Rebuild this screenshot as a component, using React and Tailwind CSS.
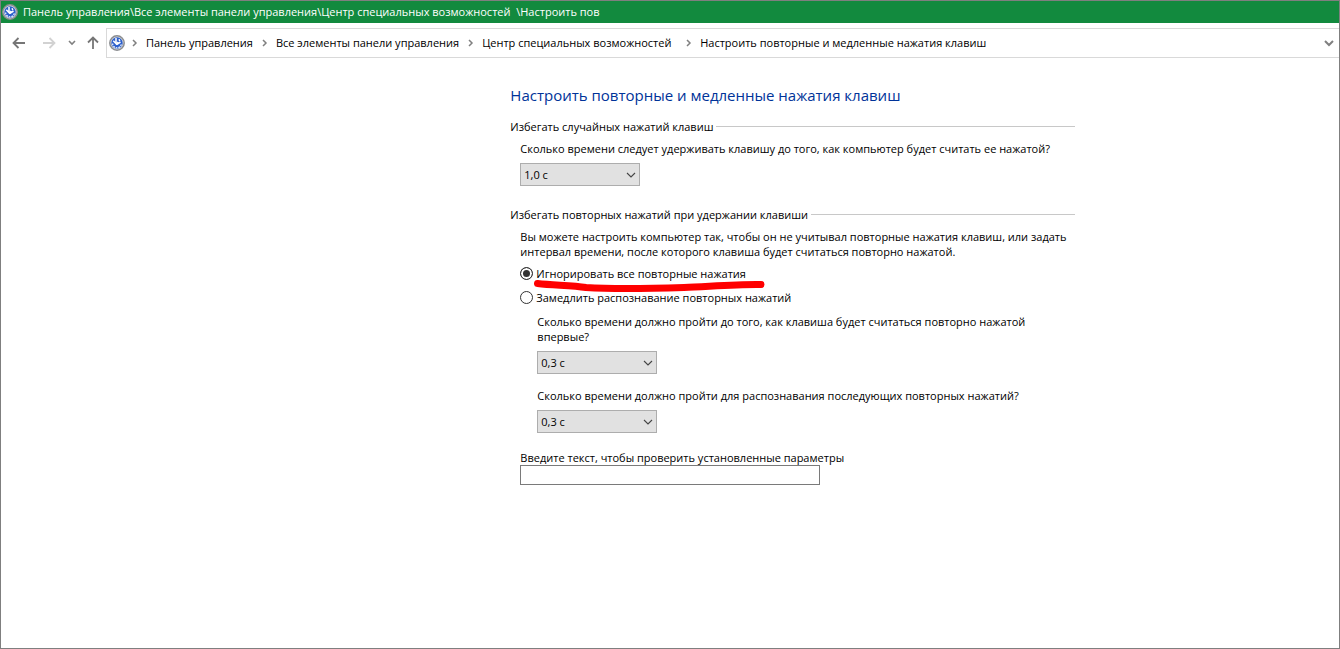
import { Fragment } from 'react';

function EaseIcon({ className }) {
  return (
    <svg className={className} viewBox="0 0 16 16" aria-hidden="true">
      <circle cx="8" cy="8" r="7.2" fill="#d9dadc" stroke="#8b8d90" strokeWidth="1.5" />
      <circle cx="8" cy="8" r="5.7" fill="#2c5fcb" />
      <path d="M3.600 8.500A4.400 4.400 0 0 0 12.400 8.500" fill="none" stroke="#e6eefc" strokeWidth="1.300" strokeDasharray="1.800 0.900" />
      <path d="M7 3v5M4.300 5.800l3.200 3.400 1.700-2.200M8 9.300l3.500-2.300M10 4.200l.8 1.800" fill="none" stroke="#fff" strokeWidth="1.500" />
    </svg>
  );
}

function Arrow({ d, className, label }) {
  return (
    <button type="button" aria-label={label} className={className}>
      <svg width="14" height="14" viewBox="0 0 14 14" fill="none" stroke="currentColor" strokeWidth="1.8">
        <path d={d} />
      </svg>
    </button>
  );
}

function Separator() {
  return (
    <svg className="mx-2 shrink-0 text-[#808080]" width="7" height="8" viewBox="0 0 7 8" fill="none" stroke="currentColor" strokeWidth="1.5" aria-hidden="true">
      <path d="M2 1l3 3-3 3" />
    </svg>
  );
}

function DelaySelect({ id, value, options }) {
  return (
    <div className="relative mt-[7px] w-[120px]">
      <select id={id} defaultValue={value} className="block h-[23px] w-full appearance-none border border-[#adadad] bg-[#e1e1e1] pr-5 pl-[3px] text-black">
        {options.map((o) => (
          <option key={o}>{o}</option>
        ))}
      </select>
      <svg className="pointer-events-none absolute top-2 right-1" width="10" height="8" viewBox="0 0 10 8" fill="none" stroke="#444444" strokeWidth="1.1" aria-hidden="true">
        <path d="M1 2l4 4 4-4" />
      </svg>
    </div>
  );
}

function GroupTitle({ children }) {
  return (
    <div className="mr-[9px] flex items-center gap-[3px]">
      <h2 className="shrink-0">{children}</h2>
      <span className="h-px flex-1 bg-[#c8c8c8]" />
    </div>
  );
}

function Choice({ value, checked, children }) {
  return (
    <label className="flex items-center gap-[3px]">
      <input
        type="radio"
        name="repeat"
        value={value}
        defaultChecked={checked}
        className="size-[13px] shrink-0 appearance-none rounded-full border border-[#333333] bg-white checked:bg-[#333333] checked:shadow-[inset_0_0_0_2px_#ffffff]"
      />
      {children}
    </label>
  );
}

const crumbs = ['Панель управления', 'Все элементы панели управления', 'Центр специальных возможностей  ', 'Настроить повторные и медленные нажатия клавиш'];
const delays = ['0,3 с', '0,5 с', '0,7 с', '1,0 с', '1,4 с', '2,0 с'];

export default function App() {
  return (
    <div className="flex min-h-screen flex-col border border-[#7f7f7f] bg-white font-['Open_Sans','Noto_Sans',sans-serif] text-[11px] leading-[15px] font-medium text-black">
      <header className="flex h-[22px] items-center bg-[#128a3e] pl-px text-white">
        <EaseIcon className="size-4 shrink-0" />
        <span className="ml-[5px] truncate pb-0.5 whitespace-pre">Панель управления\Все элементы панели управления\Центр специальных возможностей  \Настроить пов</span>
      </header>

      <nav className="flex items-center pt-[5px]" aria-label="Адрес">
        <Arrow label="Назад" className="ml-[11px] text-[#767676]" d="M13 7H1.5M6.5 2l-5 5 5 5" />
        <Arrow label="Вперёд" className="ml-4 text-[#d2d2d2]" d="M1 7h11.500M7.500 2l5 5-5 5" />
        <button type="button" aria-label="Последние расположения" className="ml-3 text-[#808080]">
          <svg width="8" height="6" viewBox="0 0 8 6" fill="none" stroke="currentColor" strokeWidth="1.6">
            <path d="M1 1l3 3 3-3" />
          </svg>
        </button>
        <Arrow label="Вверх" className="ml-2.5 text-[#767676]" d="M7 13V1.500M2 6.500l5-5 5 5" />
        <div className="ml-1.5 flex h-[30px] min-w-0 flex-1 items-center border border-r-0 border-[#d9d9d9] pl-0.5">
          <EaseIcon className="-mr-0.5 size-4 shrink-0" />
          {crumbs.map((c) => (
            <Fragment key={c}>
              <Separator />
              <a href="#" className="pb-0.5 whitespace-pre">{c}</a>
            </Fragment>
          ))}
          <button type="button" aria-label="Предыдущие расположения" className="mr-[5px] ml-auto text-[#808080]">
            <svg width="10" height="8" viewBox="0 0 10 8" fill="none" stroke="currentColor" strokeWidth="2">
              <path d="M1 2l4 4 4-4" />
            </svg>
          </button>
        </div>
      </nav>

      <main className="grid grid-cols-[2fr_574px_1fr] pt-[27px]">
        <form className="col-start-2">
          <h1 className="text-[15px] leading-5 font-normal text-[#003399]">Настроить повторные и медленные нажатия клавиш</h1>

          <section className="mt-3.5">
            <GroupTitle>Избегать случайных нажатий клавиш</GroupTitle>
            <div className="mt-[7px] pl-2.5">
              <label htmlFor="hold" className="block whitespace-nowrap">Сколько времени следует удерживать клавишу до того, как компьютер будет считать ее нажатой?</label>
              <DelaySelect id="hold" value="1,0 с" options={delays} />
            </div>
          </section>

          <section className="mt-[21px]">
            <GroupTitle>Избегать повторных нажатий при удержании клавиши</GroupTitle>
            <div className="mt-[7px] pl-2.5">
              <p className="whitespace-nowrap">
                Вы можете настроить компьютер так, чтобы он не учитывал повторные нажатия клавиш, или задать
                <br />
                интервал времени, после которого клавиша будет считаться повторно нажатой.
              </p>
              <div className="relative mt-[7px] flex flex-col items-start gap-[9px]">
                <Choice value="ignore" checked>Игнорировать все повторные нажатия</Choice>
                <Choice value="slow">Замедлить распознавание повторных нажатий</Choice>
                <svg className="pointer-events-none absolute top-3 left-3.5" width="232" height="18" viewBox="0 0 232 18" fill="none" stroke="#ff0000" strokeWidth="7" strokeLinecap="round" strokeLinejoin="round" aria-hidden="true">
                  <path d="M3.500 5.500C20 7.500 38 7 52 9.500 82 11.500 120 10.500 150 9.500 175 8.500 205 6 227 6.500" />
                </svg>
              </div>
              <div className="mt-[9px] pl-[17px]">
                <label htmlFor="first" className="block">
                  Сколько времени должно пройти до того, как клавиша будет считаться повторно нажатой
                  <br />
                  впервые?
                </label>
                <DelaySelect id="first" value="0,3 с" options={delays} />
                <label htmlFor="next" className="mt-3.5 block">Сколько времени должно пройти для распознавания последующих повторных нажатий?</label>
                <DelaySelect id="next" value="0,3 с" options={delays} />
              </div>
              <label htmlFor="test" className="mt-[17px] block">Введите текст, чтобы проверить установленные параметры</label>
              <input id="test" type="text" className="block h-5 w-[300px] border border-[#7a7a7a] bg-white px-1" />
            </div>
          </section>
        </form>
      </main>
    </div>
  );
}
